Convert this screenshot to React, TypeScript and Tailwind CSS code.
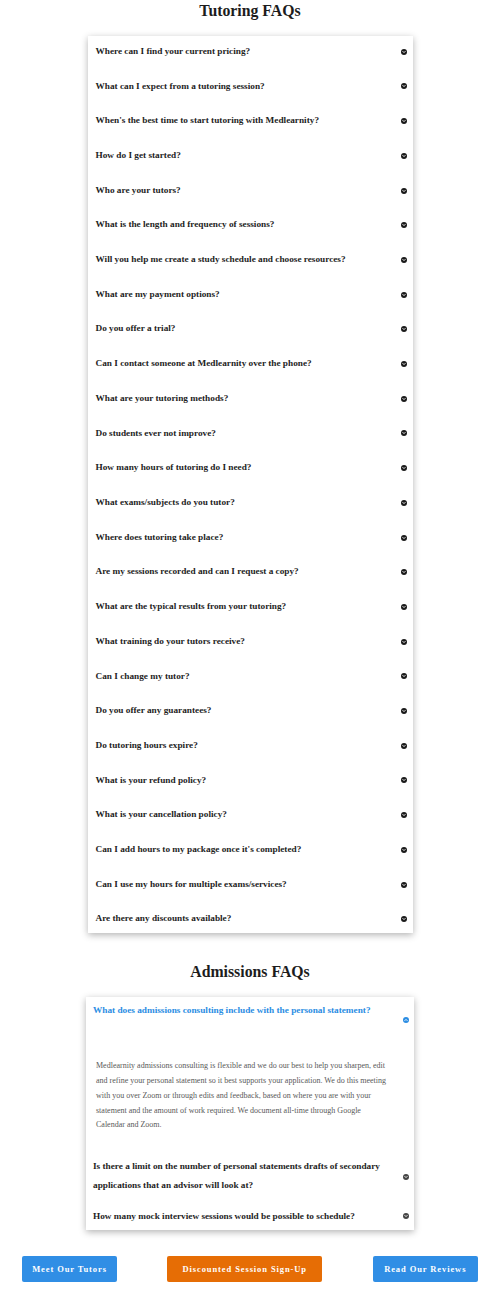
import React from "react";

const tutoring = [
  "Where can I find your current pricing?",
  "What can I expect from a tutoring session?",
  "When's the best time to start tutoring with Medlearnity?",
  "How do I get started?",
  "Who are your tutors?",
  "What is the length and frequency of sessions?",
  "Will you help me create a study schedule and choose resources?",
  "What are my payment options?",
  "Do you offer a trial?",
  "Can I contact someone at Medlearnity over the phone?",
  "What are your tutoring methods?",
  "Do students ever not improve?",
  "How many hours of tutoring do I need?",
  "What exams/subjects do you tutor?",
  "Where does tutoring take place?",
  "Are my sessions recorded and can I request a copy?",
  "What are the typical results from your tutoring?",
  "What training do your tutors receive?",
  "Can I change my tutor?",
  "Do you offer any guarantees?",
  "Do tutoring hours expire?",
  "What is your refund policy?",
  "What is your cancellation policy?",
  "Can I add hours to my package once it's completed?",
  "Can I use my hours for multiple exams/services?",
  "Are there any discounts available?",
];

const answerLines = [
  "Medlearnity admissions consulting is flexible and we do our best to help you sharpen, edit",
  "and refine your personal statement so it best supports your application. We do this meeting",
  "with you over Zoom or through edits and feedback, based on where you are with your",
  "statement and the amount of work required. We document all-time through Google",
  "Calendar and Zoom.",
];

function Dot({ color, up = false }: { color: string; up?: boolean }) {
  return (
    <svg width="6" height="6" viewBox="0 0 12 12" className="shrink-0 block">
      <circle cx="6" cy="6" r="6" fill={color} />
      {up ? (
        <path d="M3.6 7.2 L6 4.8 L8.4 7.2" stroke="#fff" strokeWidth="1.8" fill="none" strokeLinecap="round" strokeLinejoin="round" />
      ) : (
        <path d="M3.6 4.8 L6 7.2 L8.4 4.8" stroke="#fff" strokeWidth="1.8" fill="none" strokeLinecap="round" strokeLinejoin="round" />
      )}
    </svg>
  );
}

export default function App() {
  return (
    <div
      className="w-[500px] bg-white text-[#222]"
      style={{ fontFamily: '"Liberation Serif", "Times New Roman", serif' }}
    >
      <h2 className="text-center font-bold text-[15.8px] leading-[21px] text-[#1c1c1c]">
        Tutoring FAQs
      </h2>
      <div className="mx-auto mt-[15px] w-[325px] bg-white shadow-[0_2px_7px_rgba(0,0,0,0.3)] pt-[9.85px] pb-[7.5px] flex flex-col gap-[23px]">
        {tutoring.map((q) => (
          <div key={q} className="flex items-center justify-between pl-[8px] pr-[6px]">
            <span className="font-bold text-[9.25px] leading-[11.7px] text-[#1e1e1e]">{q}</span>
            <Dot color="#1a1a1a" />
          </div>
        ))}
      </div>

      <h2 className="mt-[28px] text-center font-bold text-[15.8px] leading-[21px] text-[#1c1c1c]">
        Admissions FAQs
      </h2>
      <div className="mx-auto mt-[15px] w-[328px] bg-white shadow-[0_2px_7px_rgba(0,0,0,0.3)] pt-[4px] pb-[4px]">
        <div className="flex items-start justify-between pl-[7px] pr-[5px]">
          <span className="font-bold text-[9.25px] leading-[18.5px] text-[#2b8de3]">
            What does admissions consulting include with the personal statement?
          </span>
          <div className="mt-[16.25px]">
            <Dot color="#2b8de3" up />
          </div>
        </div>
        <p className="mt-[36.3px] pl-[10px] pr-[8px] text-[8px] leading-[14.8px] text-[#595959]">
          {answerLines.map((l, i) => (
            <span key={i} className="block whitespace-nowrap">
              {l}
            </span>
          ))}
        </p>
        <div className="mt-[24px] flex items-center justify-between pl-[7px] pr-[5px]">
          <span className="font-bold text-[9.25px] leading-[18.5px] text-[#1e1e1e]">
            Is there a limit on the number of personal statements drafts of secondary
            <br />
            applications that an advisor will look at?
          </span>
          <div className="mt-[2px]">
            <Dot color="#444" />
          </div>
        </div>
        <div className="mt-[13px] flex items-center justify-between pl-[7px] pr-[5px]">
          <span className="font-bold text-[9.25px] leading-[18.5px] text-[#1e1e1e]">
            How many mock interview sessions would be possible to schedule?
          </span>
          <Dot color="#444" />
        </div>
      </div>

      <div className="mt-[26px] flex justify-between px-[22px]">
        <button className="h-[26.7px] w-[95px] rounded-[2px] bg-[#308ee5] text-white font-bold text-[8.5px] tracking-[0.9px] flex items-center justify-center">
          Meet Our Tutors
        </button>
        <button className="h-[26.7px] w-[155px] rounded-[2px] bg-[#e66d05] text-white font-bold text-[8.5px] tracking-[0.9px] flex items-center justify-center">
          Discounted Session Sign-Up
        </button>
        <button className="h-[26.7px] w-[105.5px] rounded-[2px] bg-[#308ee5] text-white font-bold text-[8.5px] tracking-[0.9px] flex items-center justify-center">
          Read Our Reviews
        </button>
      </div>
      <div className="h-[16px]" />
    </div>
  );
}
